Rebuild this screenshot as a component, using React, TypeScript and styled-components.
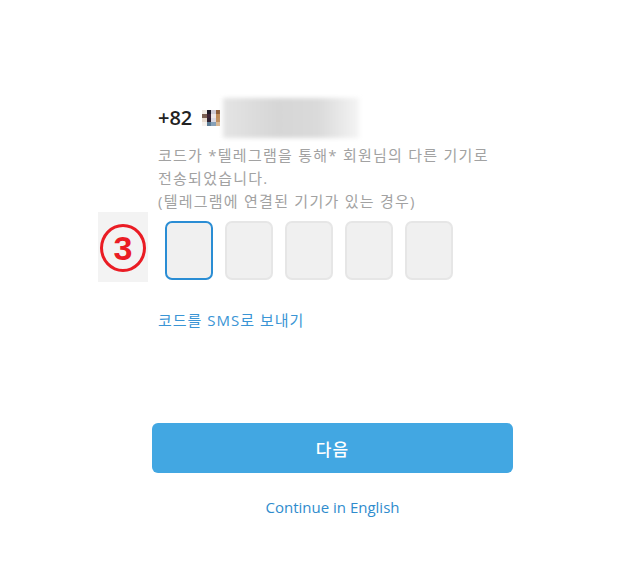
import styled, { createGlobalStyle } from "styled-components"

const GlobalStyle = createGlobalStyle`
    html, body {
        margin: 0;
        padding: 0;
        background: #ffffff;
    }
    body {
        font-family: "Open Sans", "Noto Sans CJK KR", sans-serif;
    }
`

const Page = styled.main`
    width: 630px;
    height: 578px;
    padding: 97px 0 0 152px;
    box-sizing: border-box;
`

const Column = styled.div`
    width: 361px;
    display: flex;
    flex-direction: column;
`

const PhoneRow = styled.div`
    display: flex;
    align-items: center;
    height: 41px;
    padding-left: 6px;
`

const Prefix = styled.span`
    font-size: 20px;
    font-weight: 600;
    color: #222;
    margin-right: 10px;
`

const Mosaic = styled.div`
    display: grid;
    grid-template-columns: repeat(4, 4.5px);
    grid-template-rows: repeat(4, 4px);
    margin-right: 3px;
`

const Cell = styled.span<{ $c: string }>`
    background: ${p => p.$c};
`

const Blurred = styled.div`
    width: 136px;
    height: 40px;
    background: linear-gradient(90deg, #e4e4e4 0%, #d6d6d6 40%, #dadada 70%, #f4f4f4 100%);
    filter: blur(2px);
`

const Hint = styled.p`
    margin: 6px 0 0;
    padding-left: 6px;
    font-size: 15px;
    letter-spacing: 1.25px;
    line-height: 23px;
    color: #a2a2a2;
`

const CodeRow = styled.div`
    position: relative;
    display: flex;
    gap: 12px;
    margin: 8px 0 0 13px;
`

const Badge = styled.div`
    position: absolute;
    left: -67px;
    top: -9px;
    width: 50px;
    height: 70px;
    background: #f3f3f3;
    display: flex;
    align-items: center;
    justify-content: center;
`

const Circled = styled.span`
    width: 40px;
    height: 42px;
    border: 3px solid #ea1c24;
    border-radius: 50%;
    display: flex;
    align-items: center;
    justify-content: center;
    font-family: "Liberation Sans", "Noto Sans", sans-serif;
    font-size: 34px;
    font-weight: 700;
    color: #ea1c24;
    margin-top: 2px;
`

const CodeBox = styled.div<{ $active?: boolean }>`
    width: 48px;
    height: 59px;
    box-sizing: border-box;
    border-radius: 7px;
    background: #f0f0f0;
    border: ${p => (p.$active ? "2px solid #2a8dd4" : "2px solid #e6e6e6")};
`

const SmsLink = styled.a`
    margin: 30px 0 0 6px;
    font-size: 15px;
    letter-spacing: 1px;
    line-height: 20px;
    color: #3a95d5;
    text-decoration: none;
`

const NextButton = styled.button`
    margin-top: 93px;
    height: 50px;
    width: 361px;
    border: none;
    border-radius: 6px;
    background: #42a7e2;
    color: #fff;
    font-family: "Open Sans", "Noto Sans CJK KR", sans-serif;
    font-size: 17px;
    font-weight: 500;
    letter-spacing: 1px;
`

const EnglishLink = styled.a`
    margin-top: 24px;
    align-self: center;
    font-size: 15px;
    line-height: 20px;
    color: #2f8ccd;
    text-decoration: none;
`

const mosaic = [
    "#efe9e2", "#1f1a26", "#cfcbd6", "#8d5e3b",
    "#7a5e50", "#3d2232", "#ece6e8", "#c08c58",
    "#e9dccf", "#2f2030", "#dcd8e2", "#bf8f60",
    "#f6f1ed", "#5d7d96", "#86a0b8", "#d8b894",
]

export default function App() {
    return (
        <>
            <GlobalStyle />
            <Page>
                <Column>
                    <PhoneRow>
                        <Prefix>+82</Prefix>
                        <Mosaic>
                            {mosaic.map((c, i) => <Cell key={i} $c={c} />)}
                        </Mosaic>
                        <Blurred />
                    </PhoneRow>
                    <Hint>
                        코드가 *텔레그램을 통해* 회원님의 다른 기기로<br />
                        전송되었습니다.<br />
                        (텔레그램에 연결된 기기가 있는 경우)
                    </Hint>
                    <CodeRow>
                        <Badge><Circled>3</Circled></Badge>
                        <CodeBox $active />
                        <CodeBox />
                        <CodeBox />
                        <CodeBox />
                        <CodeBox />
                    </CodeRow>
                    <SmsLink href="#">코드를 SMS로 보내기</SmsLink>
                    <NextButton>다음</NextButton>
                    <EnglishLink href="#">Continue in English</EnglishLink>
                </Column>
            </Page>
        </>
    )
}
